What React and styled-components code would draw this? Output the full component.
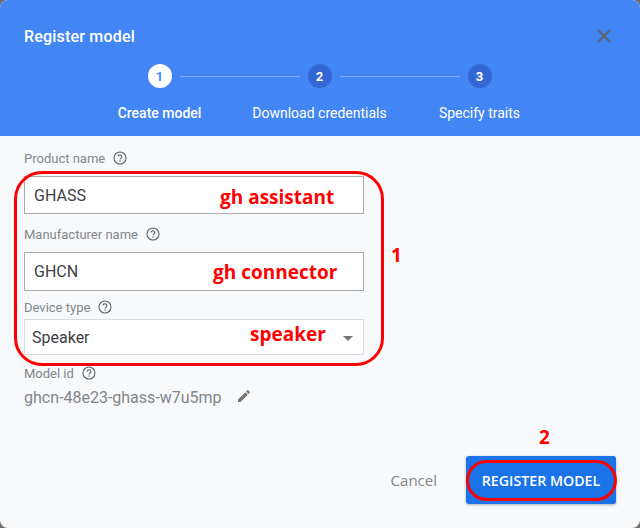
import React from 'react';
import styled, { createGlobalStyle } from 'styled-components';

const Global = createGlobalStyle`
  html, body { margin: 0; padding: 0; background: #6f6f6f; }
  body { font-family: Roboto, "Liberation Sans", sans-serif; }
`;

const Dialog = styled.div`
  position: relative;
  width: 640px;
  height: 528px;
  display: flex;
  flex-direction: column;
  background: #f8f9fa;
  border-radius: 8px;
  overflow: hidden;
`;

const Header = styled.header`
  height: 136px;
  box-sizing: border-box;
  background: #4285f4;
  padding: 27px 24px 0;
  color: #fff;
`;

const TitleRow = styled.div`
  display: flex;
  justify-content: space-between;
  align-items: center;
  height: 18px;
`;

const Title = styled.h1`
  margin: 0;
  font-size: 16px;
  font-weight: 500;
  letter-spacing: 0.2px;
`;

const CloseIcon = styled.svg`
  width: 16px;
  height: 16px;
  margin-right: 4px;
  stroke: #5f6368;
  stroke-width: 1.8;
  fill: none;
`;

const Stepper = styled.div`
  display: grid;
  grid-template-columns: repeat(3, 160px);
  margin: 19px 0 0 55.5px;
`;

const Step = styled.div`
  position: relative;
  display: flex;
  flex-direction: column;
  align-items: center;
  gap: 16px;
`;

const Circle = styled.div`
  width: 24px;
  height: 24px;
  border-radius: 50%;
  display: flex;
  align-items: center;
  justify-content: center;
  font-size: 13px;
  font-weight: 700;
  background: ${(p) => (p.$active ? '#fff' : '#3367d6')};
  color: ${(p) => (p.$active ? '#4285f4' : '#fff')};
`;

const Connector = styled.span`
  position: absolute;
  top: 11.5px;
  left: 100px;
  width: 120px;
  height: 1px;
  background: rgba(255, 255, 255, 0.35);
`;

const StepLabel = styled.span`
  font-size: 14px;
  line-height: 18px;
  font-weight: ${(p) => (p.$active ? 500 : 400)};
  white-space: nowrap;
`;

const Body = styled.main`
  flex: 1;
  display: flex;
  flex-direction: column;
  padding: 14px 24px 24px;
`;

const Field = styled.div`
  width: 340px;
  margin-bottom: ${(p) => p.$gap || 0}px;
`;

const Label = styled.div`
  display: flex;
  align-items: center;
  gap: 8px;
  height: 16px;
  font-size: 13px;
  color: #80868b;
`;

const HelpIcon = styled.svg`
  width: 14px;
  height: 14px;
  fill: none;
  stroke: #5f6368;
  stroke-width: 1.1;
`;

const Input = styled.div`
  box-sizing: border-box;
  height: ${(p) => p.$height}px;
  margin-top: ${(p) => p.$top}px;
  padding: 0 9px;
  display: flex;
  align-items: center;
  background: #fff;
  border: 1px solid #a8abae;
  font-size: 16px;
  color: #3c4043;
`;

const SelectBox = styled(Input)`
  justify-content: space-between;
  padding: 0 10px 0 7px;
  border-color: #dadce0;
`;

const Caret = styled.span`
  width: 0;
  height: 0;
  border-left: 5px solid transparent;
  border-right: 5px solid transparent;
  border-top: 5px solid #757575;
  margin-top: 2px;
`;

const ModelRow = styled.div`
  display: flex;
  align-items: center;
  gap: 14px;
  margin-top: 6px;
  height: 20px;
  font-size: 16px;
  color: #80868b;
`;

const PencilIcon = styled.svg`
  width: 16px;
  height: 16px;
  fill: #757575;
  margin-top: -2px;
`;

const Actions = styled.div`
  margin-top: auto;
  display: flex;
  justify-content: flex-end;
  align-items: center;
  gap: 29px;
`;

const CancelButton = styled.button`
  border: 0;
  padding: 0;
  background: none;
  font-family: "Open Sans", sans-serif;
  font-size: 15px;
  color: #80868b;
`;

const PrimaryButton = styled.button`
  width: 150px;
  height: 48px;
  border: 0;
  border-radius: 3px;
  background: #1a73e8;
  color: #fff;
  font-family: "Open Sans", sans-serif;
  font-size: 14.2px;
  font-weight: 600;
  box-shadow: 0 1px 3px rgba(60, 64, 67, 0.4);
`;

const Note = styled.span`
  position: absolute;
  left: ${(p) => p.$x}px;
  top: ${(p) => p.$y}px;
  font-family: "Open Sans", sans-serif;
  font-size: 19px;
  line-height: 24px;
  font-weight: 700;
  color: #f00;
  white-space: nowrap;
`;

const Ring = styled.div`
  position: absolute;
  box-sizing: border-box;
  left: ${(p) => p.$x}px;
  top: ${(p) => p.$y}px;
  width: ${(p) => p.$w}px;
  height: ${(p) => p.$h}px;
  border: 3px solid #f00;
  border-radius: ${(p) => p.$r}px;
`;

const Help = () => (
  <HelpIcon viewBox="0 0 14 14">
    <circle cx="7" cy="7" r="6" />
    <path d="M5.2 5.6a1.8 1.8 0 1 1 2.8 1.5c-.6.4-1 .7-1 1.5" />
    <path d="M7 9.6v1.1" />
  </HelpIcon>
);

const steps = ['Create model', 'Download credentials', 'Specify traits'];

const App = () => (
  <>
    <Global />
    <Dialog>
      <Header>
        <TitleRow>
          <Title>Register model</Title>
          <CloseIcon viewBox="0 0 16 16">
            <path d="M2 2l12 12M14 2L2 14" />
          </CloseIcon>
        </TitleRow>
        <Stepper>
          {steps.map((label, i) => (
            <Step key={label}>
              <Circle $active={i === 0}>{i + 1}</Circle>
              {i < 2 && <Connector />}
              <StepLabel $active={i === 0}>{label}</StepLabel>
            </Step>
          ))}
        </Stepper>
      </Header>
      <Body>
        <Field $gap={12}>
          <Label>Product name <Help /></Label>
          <Input $height={38} $top={10}>GHASS</Input>
        </Field>
        <Field $gap={8}>
          <Label>Manufacturer name <Help /></Label>
          <Input $height={39} $top={10}>GHCN</Input>
        </Field>
        <Field $gap={10}>
          <Label>Device type <Help /></Label>
          <SelectBox $height={36} $top={4}>Speaker <Caret /></SelectBox>
        </Field>
        <Field>
          <Label>Model id <Help /></Label>
          <ModelRow>
            ghcn-48e23-ghass-w7u5mp
            <PencilIcon viewBox="0 0 24 24">
              <path d="M3 17.25V21h3.75L17.81 9.94l-3.75-3.75L3 17.25zM20.71 7.04a1 1 0 0 0 0-1.41l-2.34-2.34a1 1 0 0 0-1.41 0l-1.83 1.83 3.75 3.75 1.83-1.83z" />
            </PencilIcon>
          </ModelRow>
        </Field>
        <Actions>
          <CancelButton>Cancel</CancelButton>
          <PrimaryButton>REGISTER MODEL</PrimaryButton>
        </Actions>
      </Body>
      <Ring $x={14} $y={171} $w={370} $h={195} $r={28} />
      <Ring $x={466} $y={460} $w={151} $h={41} $r={21} />
      <Note $x={220} $y={185}>gh assistant</Note>
      <Note $x={213} $y={260}>gh connector</Note>
      <Note $x={250} $y={322}>speaker</Note>
      <Note $x={391} $y={243}>1</Note>
      <Note $x={539} $y={425}>2</Note>
    </Dialog>
  </>
);

export default App;
